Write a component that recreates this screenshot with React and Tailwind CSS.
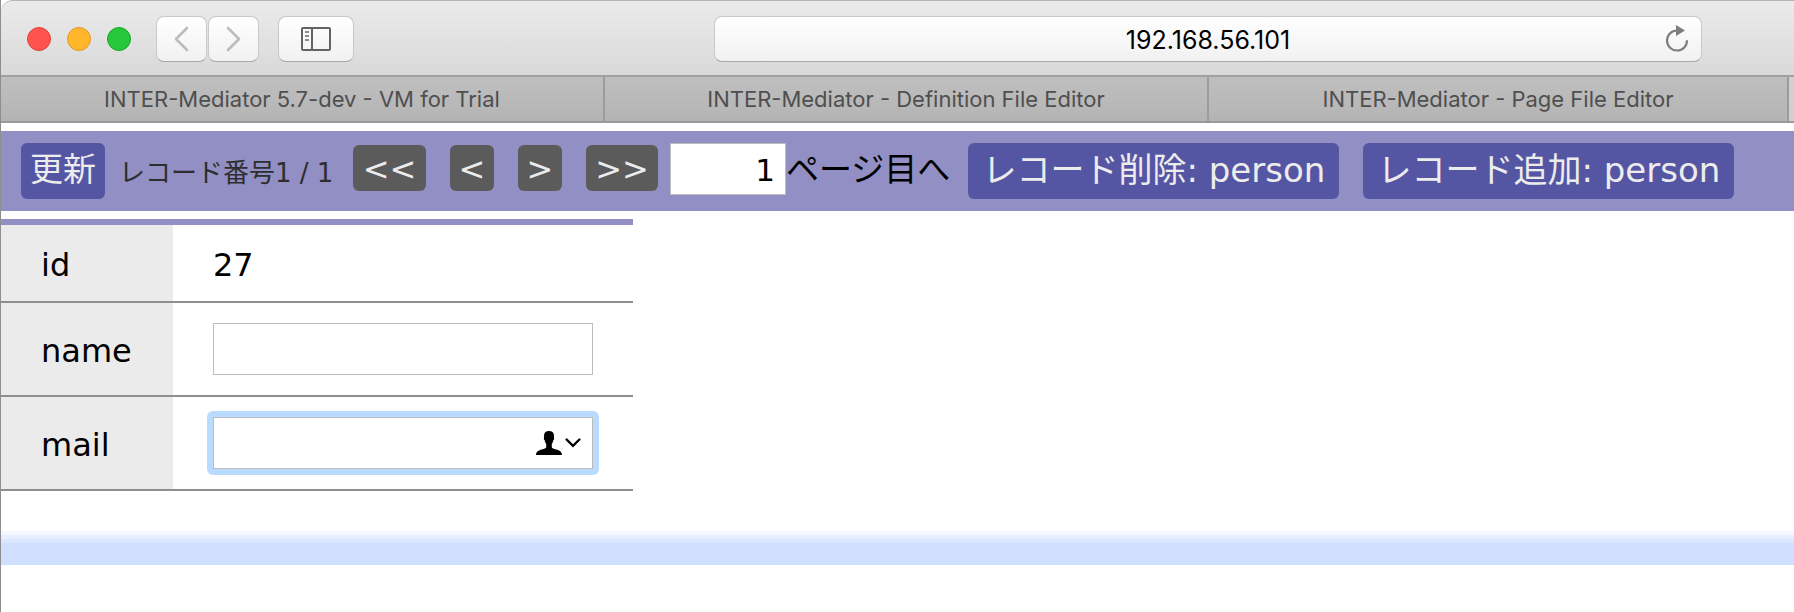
const uiFont = "font-['Inter','Liberation_Sans',sans-serif]";
const pageFont = "font-['DejaVu_Sans','Noto_Sans_CJK_JP',sans-serif]";

function ToolButton({ label, className, children }) {
  return (
    <button
      type="button"
      aria-label={label}
      className={`flex h-[46px] shrink-0 items-center justify-center rounded-lg border border-[#c9c9c9] border-b-[#a6a6a6] bg-linear-to-b from-white to-[#f1f1f1] ${className}`}
    >
      {children}
    </button>
  );
}

function BrowserBar() {
  return (
    <div className="flex h-[77px] items-center rounded-tl-xl border-t border-b-2 border-t-[#b4b4b4] border-b-[#a0a0a0] bg-linear-to-b from-[#ebebeb] to-[#d9d9d9] pt-[2px] pr-[92px] pl-[26px]">
      <div className="flex shrink-0 gap-4">
        <button type="button" aria-label="Close" className="size-6 rounded-full border border-[#e2413d] bg-[#ff544d]" />
        <button type="button" aria-label="Minimize" className="size-6 rounded-full border border-[#dd9a26] bg-[#ffb62a]" />
        <button type="button" aria-label="Zoom" className="size-6 rounded-full border border-[#19a52b] bg-[#26c739]" />
      </div>
      <div className="ml-[25px] flex shrink-0 gap-px">
        <ToolButton label="Back" className="w-[51px]">
          <svg width="16" height="26" viewBox="0 0 16 26" fill="none" stroke="#bcbcbc" strokeWidth="2.6" strokeLinecap="round" strokeLinejoin="round">
            <path d="M13 2L2 13l11 11" />
          </svg>
        </ToolButton>
        <ToolButton label="Forward" className="w-[51px]">
          <svg width="16" height="26" viewBox="0 0 16 26" fill="none" stroke="#bcbcbc" strokeWidth="2.6" strokeLinecap="round" strokeLinejoin="round">
            <path d="M2 2l11 11L2 24" />
          </svg>
        </ToolButton>
      </div>
      <ToolButton label="Show sidebar" className="ml-[19px] w-[76px]">
        <svg width="30" height="24" viewBox="0 0 30 24" fill="none" stroke="#636363" strokeWidth="2">
          <rect x="1" y="1" width="28" height="22" rx="1" />
          <path d="M11 1v22" />
          <path d="M4 5h4M4 9h4M4 13h4" stroke="#8c8c8c" />
        </svg>
      </ToolButton>
      <div className="ml-[360px] flex h-[46px] min-w-0 flex-1 items-center rounded-lg border border-[#c9c9c9] border-b-[#a6a6a6] bg-linear-to-b from-white to-[#f1f1f1] pr-3 pl-9">
        <input
          type="text"
          aria-label="Address"
          defaultValue="192.168.56.101"
          className="min-w-0 flex-1 bg-transparent pt-[2px] text-center text-[25px] leading-8 text-black outline-none"
        />
        <button type="button" aria-label="Reload" className="shrink-0">
          <svg width="24" height="28" viewBox="0 0 24 28" fill="none">
            <path d="M12 5.500A10 10 0 1 0 22 15.200" stroke="#7d7d7d" strokeWidth="2.200" />
            <path d="M11 0l9 5.500L11 11z" fill="#7d7d7d" />
          </svg>
        </button>
      </div>
    </div>
  );
}

function TabBar() {
  const tab = "block truncate border-r-2 border-[#9c9c9c] text-center text-[22px] leading-[44px] text-[#4f4f4f]";
  return (
    <nav className="grid grid-cols-[604fr_604fr_580fr_5fr] border-b-2 border-[#9a9a9a] bg-linear-to-b from-[#bfbfbf] to-[#b4b4b4]">
      <a href="#trial" className={tab}>INTER-Mediator 5.7-dev - VM for Trial</a>
      <a href="#definition" className={tab}>INTER-Mediator - Definition File Editor</a>
      <a href="#page" className={tab}>INTER-Mediator - Page File Editor</a>
      <div className="bg-[#d0d0d0]" />
    </nav>
  );
}

function NavButton({ className, children }) {
  return (
    <button type="button" className={`mt-[2px] h-[46px] shrink-0 rounded-md bg-[#5b5b5b] pt-[2px] text-center text-[32px] leading-[44px] text-[#ececec] ${className}`}>
      {children}
    </button>
  );
}

function ActionButton({ className, children }) {
  return (
    <button type="button" className={`h-14 shrink-0 rounded-md bg-[#5556a3] pb-[2px] text-center leading-[54px] whitespace-nowrap text-[#ececec] ${className}`}>
      {children}
    </button>
  );
}

function RecordBar() {
  return (
    <div className="mt-2 flex h-20 items-start bg-[#918fc4] pt-3 pl-5">
      <ActionButton className="w-[84px] text-[33px]">更新</ActionButton>
      <span className="ml-[14px] w-[234px] shrink-0 text-[26px] leading-[60px] whitespace-nowrap text-[#2e2e2e]">レコード番号1 / 1</span>
      <div className="flex gap-6">
        <NavButton className="w-[73px]">&lt;&lt;</NavButton>
        <NavButton className="w-11">&lt;</NavButton>
        <NavButton className="w-11">&gt;</NavButton>
        <NavButton className="w-[72px]">&gt;&gt;</NavButton>
      </div>
      <label className="ml-3 flex shrink-0 items-start text-[33px] leading-[54px] whitespace-nowrap text-black">
        <input type="text" defaultValue="1" className="h-[52px] w-[116px] border border-[#bcbcbc] bg-white pt-[2px] pr-[10px] text-right text-[31px] outline-none" />
        ページ目へ
      </label>
      <div className="ml-[18px] flex gap-6">
        <ActionButton className="w-[371px] text-[34px]">レコード削除: person</ActionButton>
        <ActionButton className="w-[371px] text-[34px]">レコード追加: person</ActionButton>
      </div>
    </div>
  );
}

function Row({ name, htmlFor, height, children }) {
  return (
    <tr className={height}>
      <th scope="row" className="bg-[#ebebeb] pt-1 pl-10 text-left align-middle font-normal">
        {htmlFor ? <label htmlFor={htmlFor}>{name}</label> : name}
      </th>
      <td className="px-10 align-middle">{children}</td>
    </tr>
  );
}

function RecordTable() {
  return (
    <table className="mt-2 w-[632px] table-fixed border-separate border-spacing-0 border-t-6 border-[#918fc4] text-[32px] leading-10 text-black [&_td]:border-b-2 [&_td]:border-[#8e8e8e] [&_th]:border-b-2 [&_th]:border-[#8e8e8e]">
      <colgroup>
        <col className="w-[172px]" />
        <col />
      </colgroup>
      <tbody>
        <Row name="id" height="h-[78px]">
          <span className="block pt-1">27</span>
        </Row>
        <Row name="name" htmlFor="name" height="h-[94px]">
          <input id="name" type="text" className="block h-[52px] w-full border border-[#bcbcbc] bg-white px-2 outline-none" />
        </Row>
        <Row name="mail" htmlFor="mail" height="h-[94px]">
          <div className="-m-[6px] rounded-md bg-[#b8dbff] p-[6px]">
            <div className="flex h-[52px] items-center border border-[#bcbcbc] bg-white pr-[11px]">
              <input id="mail" type="email" className="h-full min-w-0 flex-1 px-2 outline-none" />
              <button type="button" aria-label="Choose contact" className="flex shrink-0 items-center gap-[3px]">
                <svg width="26" height="24" viewBox="0 0 26 24" fill="#000">
                  <path d="M13 0C9.800 0 7.900 1.700 8 4.600L8.100 6.500c-.6.400-.2 2.300.6 2.700.3 1.700.9 2.900 1.500 3.700v3.300c-.2 1.200-2 1.600-4.400 2.200C2.500 19.200.2 20.400 0 24h26c-.2-3.600-2.500-4.800-5.800-5.600-2.400-.6-4.200-1-4.400-2.200v-3.300c.6-.8 1.200-2 1.500-3.700.8-.4 1.200-2.300.6-2.700l.1-1.900C18.100 1.700 16.200 0 13 0z" />
                </svg>
                <svg width="16" height="10" viewBox="0 0 16 10" fill="none" stroke="#000" strokeWidth="2.400" strokeLinecap="round">
                  <path d="M1.600 1.500L8 7.900l6.400-6.400" />
                </svg>
              </button>
            </div>
          </div>
        </Row>
      </tbody>
    </table>
  );
}

export default function App() {
  return (
    <div className="min-h-screen overflow-hidden border-l border-[#8e8e8e] bg-white">
      <header className={uiFont}>
        <BrowserBar />
        <TabBar />
      </header>
      <main className={pageFont}>
        <RecordBar />
        <RecordTable />
        <div className="mt-10">
          <div className="h-1 bg-[#f5f6ff]" />
          <div className="h-1 bg-[#e7eeff]" />
          <div className="h-1 bg-[#dce6ff]" />
          <div className="h-[22px] bg-[#cfdfff]" />
        </div>
      </main>
    </div>
  );
}
